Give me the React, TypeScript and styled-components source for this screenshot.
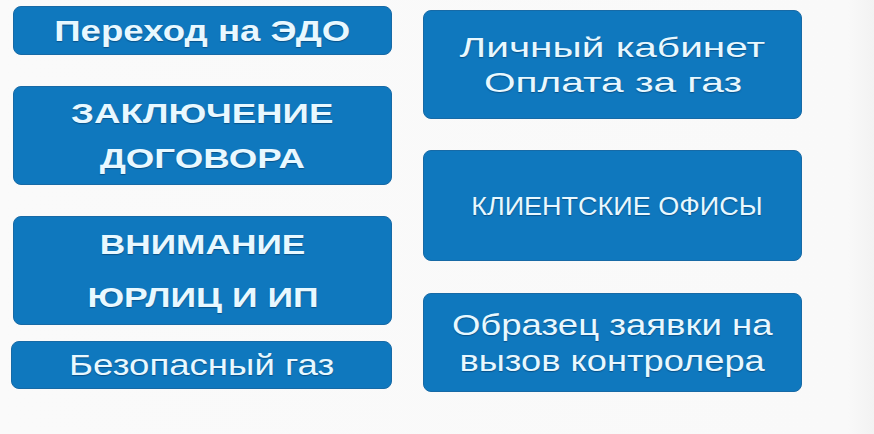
import React from "react";
import styled, { createGlobalStyle } from "styled-components";

const GlobalStyle = createGlobalStyle`
  html, body {
    margin: 0;
    padding: 0;
    background: #f9f9f9;
  }
  body {
    font-family: "Liberation Sans", Arial, sans-serif;
  }
`;

const Page = styled.div`
  width: 874px;
  height: 434px;
  box-sizing: border-box;
  display: flex;
  gap: 31px;
  padding-left: 13px;
  background: linear-gradient(90deg, #fafafa 0%, #f9f9f9 97%, #f2f2f2 100%);
  overflow: hidden;
`;

const Column = styled.div<{ $top: number }>`
  display: flex;
  flex-direction: column;
  width: 379px;
  padding-top: ${(p) => p.$top}px;
`;

const Tile = styled.a<{ $h: number; $gap?: number; $shift?: number; $indent?: number }>`
  display: flex;
  align-items: center;
  justify-content: center;
  flex-direction: column;
  box-sizing: border-box;
  height: ${(p) => p.$h}px;
  margin-top: ${(p) => p.$gap ?? 0}px;
  margin-left: ${(p) => p.$shift ?? 0}px;
  padding-left: ${(p) => p.$indent ?? 0}px;
  background: #0f78be;
  border: 1px solid #176aa6;
  border-radius: 8px;
  color: #e8f8ff;
  text-decoration: none;
  text-shadow: 0 1px 1px rgba(0, 35, 70, 0.45);
`;

const Label = styled.span<{ $size: number; $weight: number; $line: number; $stretch: number }>`
  display: block;
  font-size: ${(p) => p.$size}px;
  font-weight: ${(p) => p.$weight};
  line-height: ${(p) => p.$line}px;
  white-space: nowrap;
  transform: scaleX(${(p) => p.$stretch});
  text-align: center;
`;

export default function App() {
  return (
    <>
      <GlobalStyle />
      <Page>
        <Column $top={6}>
          <Tile $h={49}>
            <Label $size={30} $weight={700} $line={34} $stretch={1.22}>Переход на ЭДО</Label>
          </Tile>
          <Tile $h={99} $gap={31}>
            <Label $size={28} $weight={700} $line={45} $stretch={1.31}>ЗАКЛЮЧЕНИЕ</Label>
            <Label $size={28} $weight={700} $line={45} $stretch={1.31}>ДОГОВОРА</Label>
          </Tile>
          <Tile $h={109} $gap={31}>
            <Label $size={28} $weight={700} $line={53} $stretch={1.26}>ВНИМАНИЕ</Label>
            <Label $size={28} $weight={700} $line={53} $stretch={1.27}>ЮРЛИЦ И ИП</Label>
          </Tile>
          <Tile $h={48} $gap={16} $shift={-2}>
            <Label $size={30} $weight={400} $line={34} $stretch={1.22}>Безопасный газ</Label>
          </Tile>
        </Column>
        <Column $top={10}>
          <Tile $h={109}>
            <Label $size={28} $weight={400} $line={35} $stretch={1.45}>Личный кабинет</Label>
            <Label $size={28} $weight={400} $line={35} $stretch={1.45}>Оплата за газ</Label>
          </Tile>
          <Tile $h={111} $gap={31} $indent={8}>
            <Label $size={25} $weight={400} $line={30} $stretch={1.08}>КЛИЕНТСКИЕ ОФИСЫ</Label>
          </Tile>
          <Tile $h={99} $gap={32}>
            <Label $size={29} $weight={400} $line={36} $stretch={1.26}>Образец заявки на</Label>
            <Label $size={29} $weight={400} $line={36} $stretch={1.25}>вызов контролера</Label>
          </Tile>
        </Column>
      </Page>
    </>
  );
}
